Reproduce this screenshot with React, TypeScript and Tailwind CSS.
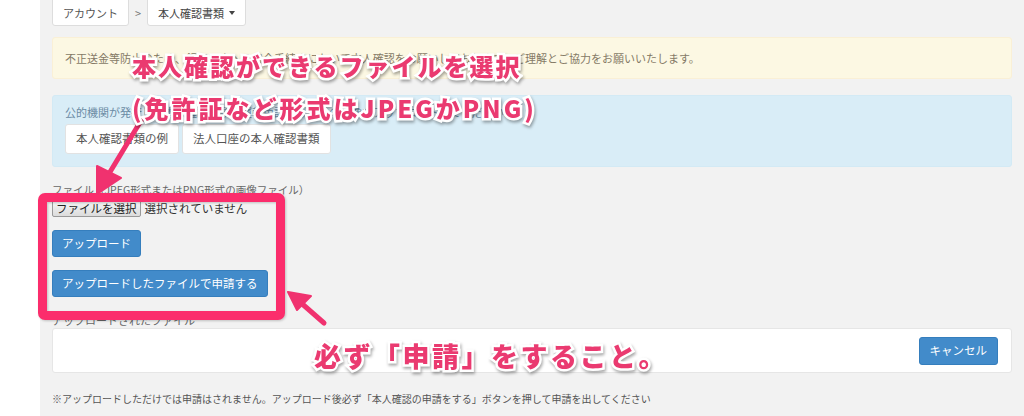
import React from "react";

const jp = "font-['Meiryo','Noto_Sans_CJK_JP','Noto_Sans',sans-serif]";

function Annot({ children, className = "" }: { children: React.ReactNode; className?: string }) {
  return (
    <div
      className={`absolute whitespace-nowrap font-['Noto_Sans_CJK_JP',sans-serif] font-black text-[#ea3a70] [-webkit-text-stroke:5px_white] [paint-order:stroke_fill] [filter:drop-shadow(1px_2px_1.5px_rgba(0,0,0,0.35))] leading-none ${className}`}
    >
      {children}
    </div>
  );
}

export default function App() {
  return (
    <div className={`relative flex w-[1024px] h-[416px] overflow-hidden bg-white ${jp}`}>
      <div className="w-[40px] shrink-0 bg-white" />
      <div className="flex-1 bg-[#f2f2f2] px-[12px]">
        <div className="w-[960px] flex flex-col">
          {/* breadcrumb */}
          <div className="flex items-center gap-[6px] -mt-[3px] text-[11px] text-[#555]">
            <div className="h-[29px] px-[10px] flex items-center pt-[3px] bg-white border border-[#ddd] rounded-[3px]">アカウント</div>
            <span className="text-[#777] pt-[3px]">&gt;</span>
            <div className="h-[29px] px-[10px] flex items-center gap-[5px] pt-[3px] bg-white border border-[#ddd] rounded-[3px] text-[#444]">
              本人確認書類
              <span className="inline-block w-0 h-0 border-l-[3px] border-r-[3px] border-t-[4px] border-l-transparent border-r-transparent border-t-[#444]" />
            </div>
          </div>

          {/* yellow alert */}
          <div className="mt-[11px] h-[42px] flex items-center px-[12px] bg-[#fcf8e3] border border-[#faf0d6] rounded-[3px] text-[11px] text-[#857a66]">
            不正送金等防止のため、銀行口座への出金手続きにおいて本人確認をお願いしております。ご理解とご協力をお願いいたします。
          </div>

          {/* blue alert */}
          <div className="mt-[16px] h-[72px] flex flex-col px-[12px] pt-[9px] bg-[#d9edf7] border border-[#d3eaf5] rounded-[3px]">
            <div className="text-[11px] text-[#6a8aa3] leading-[14px]">
              公的機関が発行した本人確認書類（運転免許証など）の画像をアップロードしてください。
            </div>
            <div className="mt-[5px] flex gap-[3px] text-[11.5px] text-[#555]">
              <div className="h-[30px] px-[10px] flex items-center bg-white border border-[#e2e2e2] rounded-[3px]">本人確認書類の例</div>
              <div className="h-[30px] px-[10px] flex items-center bg-white border border-[#e2e2e2] rounded-[3px]">法人口座の本人確認書類</div>
            </div>
          </div>

          {/* file label */}
          <div className="mt-[16px] text-[10.5px] text-[#666] leading-[14px]">
            ファイル（JPEG形式またはPNG形式の画像ファイル）
          </div>

          {/* file input */}
          <div className="mt-[3px] flex items-center gap-[4px] text-[11.5px] text-[#222]">
            <div className="h-[17px] px-[3px] flex items-center bg-gradient-to-b from-[#f6f6f6] to-[#dcdcdc] border border-[#999] rounded-[2px] leading-none">ファイルを選択</div>
            <span className="text-[#333]">選択されていません</span>
          </div>

          <div className="mt-[13px] flex">
            <div className="h-[27px] px-[9px] flex items-center bg-[#428bca] border border-[#357ebd] rounded-[3px] text-[11.5px] text-white">アップロード</div>
          </div>
          <div className="mt-[13px] flex">
            <div className="h-[27px] px-[9px] flex items-center bg-[#428bca] border border-[#357ebd] rounded-[3px] text-[11.5px] text-white">アップロードしたファイルで申請する</div>
          </div>

          <div className="mt-[16px] text-[11px] text-[#666] leading-[14px]">アップロードされたファイル</div>

          {/* uploaded box */}
          <div className="mt-[1px] h-[45px] flex items-center justify-end pr-[13px] bg-white border border-[#e6e6e6] rounded-[3px]">
            <div className="h-[28px] px-[10px] flex items-center bg-[#428bca] border border-[#357ebd] rounded-[3px] text-[11.5px] text-white">キャンセル</div>
          </div>

          <div className="mt-[18px] text-[10px] text-[#555]">
            ※アップロードしただけでは申請はされません。アップロード後必ず「本人確認の申請をする」ボタンを押して申請を出してください
          </div>
        </div>
      </div>

      {/* annotations */}
      <div className="absolute left-[38px] top-[193px] w-[247px] h-[127px] border-[9px] border-[#fb2d6c] rounded-[7px] [filter:drop-shadow(1px_1px_1px_rgba(0,0,0,0.2))]" />

      <svg className="absolute left-0 top-0" width="1024" height="416" viewBox="0 0 1024 416">
        <g fill="#f0326f" stroke="#f0326f" strokeLinecap="round" strokeLinejoin="round">
          <line x1="142" y1="119" x2="110" y2="172" strokeWidth="5" />
          <polygon points="97,194 97,166 121,178" strokeWidth="2" />
          <line x1="324" y1="323" x2="300" y2="302" strokeWidth="5" />
          <polygon points="288,292 311,296 297,310" strokeWidth="2" />
        </g>
      </svg>

      <Annot className="left-[132px] top-[54px] text-[24px] tracking-[2px]">本人確認ができるファイルを選択</Annot>
      <Annot className="left-[132px] top-[96px] text-[24px] tracking-[3px]">(免許証など形式はJPEGかPNG)</Annot>
      <Annot className="left-[314px] top-[342px] text-[27px] tracking-[2.5px]">必ず「申請」をすること。</Annot>
    </div>
  );
}
